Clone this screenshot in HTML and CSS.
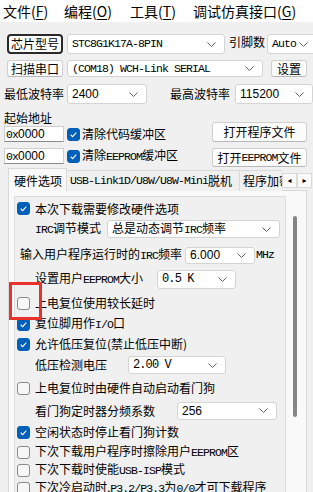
FILE: index.html
```html
<!DOCTYPE html>
<html lang="zh">
<head>
<meta charset="utf-8">
<link rel="stylesheet" href="styles.css">
</head>
<body>
<div class="menubar">
  <span>文件(<u>F</u>)</span>
  <span>编程(<u>O</u>)</span>
  <span>工具(<u>T</u>)</span>
  <span>调试仿真接口(<u>G</u>)</span>
</div>

<div class="top">
  <div class="row row1">
    <div class="btn focus w56">芯片型号</div>
    <div class="sel w158 ml4"><span class="m">STC8G1K17A-8PIN</span><svg class="chev" viewBox="0 0 9 5"><polyline points="0.5,0.5 4.5,4.5 8.5,0.5"/></svg></div>
    <span class="lbl ml4">引脚数</span>
    <div class="sel w50 ml2"><span class="m">Auto</span><svg class="chev" viewBox="0 0 9 5"><polyline points="0.5,0.5 4.5,4.5 8.5,0.5"/></svg></div>
  </div>
  <div class="row row2">
    <div class="btn w56">扫描串口</div>
    <div class="sel w196 ml4"><span class="m">(COM18) WCH-Link SERIAL</span><svg class="chev" viewBox="0 0 9 5"><polyline points="0.5,0.5 4.5,4.5 8.5,0.5"/></svg></div>
    <div class="btn w36 ml8">设置</div>
  </div>
  <div class="row row3">
    <span class="lbl w63">最低波特率</span>
    <div class="sel w80"><span class="s">2400</span><svg class="chev" viewBox="0 0 9 5"><polyline points="0.5,0.5 4.5,4.5 8.5,0.5"/></svg></div>
    <span class="lbl ml23">最高波特率</span>
    <div class="sel w78 ml5"><span class="s">115200</span><svg class="chev" viewBox="0 0 9 5"><polyline points="0.5,0.5 4.5,4.5 8.5,0.5"/></svg></div>
  </div>
  <div class="addr">
    <div class="addr-left">
      <div class="lbl h16">起始地址</div>
      <div class="row h16">
        <div class="inp"><span class="m">0x</span>0000</div>
        <span class="cb on ml3"><svg viewBox="0 0 13 13"><path d="M3.2 6.8 L5.5 9 L9.8 4.3"/></svg></span>
        <span class="lbl ml2">清除代码缓冲区</span>
      </div>
      <div class="row h16 mt6">
        <div class="inp"><span class="m">0x</span>0000</div>
        <span class="cb on ml3"><svg viewBox="0 0 13 13"><path d="M3.2 6.8 L5.5 9 L9.8 4.3"/></svg></span>
        <span class="lbl ml2">清除<span class="m">EEPROM</span>缓冲区</span>
      </div>
    </div>
    <div class="addr-right">
      <div class="btn wide h20">打开程序文件</div>
      <div class="btn wide h19 mt6">打开<span class="m">EEPROM</span>文件</div>
    </div>
  </div>
</div>

<div class="tabbar">
  <div class="tabs">
    <div class="tab active">硬件选项</div>
    <div class="tab"><span class="m">USB-Link1D/U8W/U8W-Mini</span>脱机</div>
    <div class="tab">程序加密后传输</div>
  </div>
  <div class="spin"><span class="arr">&#9666;</span></div>
  <div class="spin"><span class="arr">&#9656;</span></div>
</div>

<div class="panel">
  <div class="group">
    <div class="prow h19 ind0">
      <span class="cb on"><svg viewBox="0 0 13 13"><path d="M3.2 6.8 L5.5 9 L9.8 4.3"/></svg></span>
      <span class="lbl ml5">本次下载需要修改硬件选项</span>
    </div>
    <div class="prow h22 ind18">
      <span class="lbl"><span class="m">IRC</span>调节模式</span>
      <div class="sel psel w173 h18 ml6"><span>总是动态调节<span class="m">IRC</span>频率</span><svg class="chev" viewBox="0 0 9 5"><polyline points="0.5,0.5 4.5,4.5 8.5,0.5"/></svg></div>
    </div>
    <div class="prow h22 mt4 ind3">
      <span class="lbl">输入用户程序运行时的<span class="m">IRC</span>频率</span>
      <div class="sel psel w70 h17 ml3"><span class="s">6.000</span><svg class="chev" viewBox="0 0 9 5"><polyline points="0.5,0.5 4.5,4.5 8.5,0.5"/></svg></div>
      <span class="m ml1">MHz</span>
    </div>
    <div class="prow h26 ind18">
      <span class="lbl">设置用户<span class="m">EEPROM</span>大小</span>
      <div class="sel psel w79 h19 ml14"><span class="m">0.5 K</span><svg class="chev" viewBox="0 0 9 5"><polyline points="0.5,0.5 4.5,4.5 8.5,0.5"/></svg></div>
    </div>
    <div class="prow h22 ind0">
      <span class="cb"></span>
      <span class="lbl ml5">上电复位使用较长延时</span>
    </div>
    <div class="prow h20 ind0">
      <span class="cb on"><svg viewBox="0 0 13 13"><path d="M3.2 6.8 L5.5 9 L9.8 4.3"/></svg></span>
      <span class="lbl ml5">复位脚用作<span class="m">I/O</span>口</span>
    </div>
    <div class="prow h20 ind0">
      <span class="cb on"><svg viewBox="0 0 13 13"><path d="M3.2 6.8 L5.5 9 L9.8 4.3"/></svg></span>
      <span class="lbl ml5">允许低压复位(禁止低压中断)</span>
    </div>
    <div class="prow h22 ind18">
      <span class="lbl">低压检测电压</span>
      <div class="sel psel w98 h18 ml21"><span class="m">2.00 V</span><svg class="chev" viewBox="0 0 9 5"><polyline points="0.5,0.5 4.5,4.5 8.5,0.5"/></svg></div>
    </div>
    <div class="prow h24 ind0">
      <span class="cb"></span>
      <span class="lbl ml5">上电复位时由硬件自动启动看门狗</span>
    </div>
    <div class="prow h21 ind18">
      <span class="lbl">看门狗定时器分频系数</span>
      <div class="sel psel w100 h18 ml22"><span class="s">256</span><svg class="chev" viewBox="0 0 9 5"><polyline points="0.5,0.5 4.5,4.5 8.5,0.5"/></svg></div>
    </div>
    <div class="prow h22 ind0">
      <span class="cb on"><svg viewBox="0 0 13 13"><path d="M3.2 6.8 L5.5 9 L9.8 4.3"/></svg></span>
      <span class="lbl ml5">空闲状态时停止看门狗计数</span>
    </div>
    <div class="prow h18 ind0">
      <span class="cb"></span>
      <span class="lbl ml5">下次下载用户程序时擦除用户<span class="m">EEPROM</span>区</span>
    </div>
    <div class="prow h18 ind0">
      <span class="cb"></span>
      <span class="lbl ml5">下次下载时使能<span class="m">USB-ISP</span>模式</span>
    </div>
    <div class="prow h18 ind0">
      <span class="cb"></span>
      <span class="lbl ml5">下次冷启动时,<span class="m">P3.2/P3.3</span>为<span class="m">0/0</span>才可下载程序</span>
    </div>
  </div>
  <div class="vscroll"><div class="thumb"></div></div>
</div>

<div class="mark"></div>
</body>
</html>
```

FILE: styles.css
```css
* { box-sizing: border-box; }

body {
  margin: 0;
  width: 313px;
  height: 492px;
  overflow: hidden;
  position: relative;
  background: #f0f0f0;
  color: #000;
  font-family: "Noto Sans CJK SC", "Microsoft YaHei", sans-serif;
  font-size: 12px;
  line-height: 16px;
}

.m {
  font-family: "Liberation Mono", "Noto Sans CJK SC", monospace;
  font-size: 11.5px;
  letter-spacing: -0.9px;
}
.s {
  font-family: "Liberation Sans", "DejaVu Sans", sans-serif;
  font-size: 12px;
}

/* menu */
.menubar {
  height: 22px;
  background: #fff;
  display: grid;
  grid-template-columns: 61px 66px 63px auto;
  align-items: center;
  padding-left: 3px;
  font-size: 14px;
  line-height: 18px;
  white-space: nowrap;
}
.menubar u { text-decoration: underline; text-underline-offset: 2px; }

/* top area */
.top { padding-left: 7px; }
.row { display: flex; align-items: center; white-space: nowrap; }
.row1 { margin-top: 12px; height: 20px; }
.row1 > * { height: 20px; }
.row2 { margin-top: 6px; height: 17px; }
.row2 > * { height: 17px; }
.row3 { margin-top: 7px; height: 20px; margin-left: -3px; }
.row3 > .sel { height: 20px; }

.lbl { white-space: nowrap; }
.h16 { height: 16px; }
.h17 { height: 17px; }
.h18 { height: 18px; }
.h19 { height: 19px; }
.h20 { height: 20px; }
.h21 { height: 21px; }
.h22 { height: 22px; }
.h24 { height: 24px; }
.h26 { height: 26px; }
.mt4 { margin-top: 4px; }
.mt6 { margin-top: 6px; }
.ml1 { margin-left: 1px; }
.ml2 { margin-left: 2px; }
.ml3 { margin-left: 3px; }
.ml4 { margin-left: 4px; }
.ml5 { margin-left: 5px; }
.ml6 { margin-left: 6px; }
.ml8 { margin-left: 8px; }
.ml14 { margin-left: 14px; }
.ml21 { margin-left: 21px; }
.ml22 { margin-left: 22px; }
.ml23 { margin-left: 23px; }
.w36 { width: 36px; }
.w50 { width: 50px; }
.w56 { width: 56px; }
.w63 { width: 63px; }
.w70 { width: 70px; }
.w78 { width: 78px; }
.w79 { width: 79px; }
.w80 { width: 80px; }
.w98 { width: 98px; }
.w100 { width: 100px; }
.w158 { width: 158px; }
.w173 { width: 173px; }
.w196 { width: 196px; }

.btn {
  display: flex;
  align-items: center;
  justify-content: center;
  background: #fdfdfd;
  border: 1px solid #d0d0d0;
  border-bottom-color: #b8b8b8;
  border-radius: 3px;
  white-space: nowrap;
  flex: none;
}
.btn.focus {
  border: 2px solid #2a2a2a;
  box-shadow: inset 0 0 0 1px #fff;
  border-radius: 4px;
}
.btn.wide { width: 95px; }

.sel {
  display: flex;
  align-items: center;
  justify-content: space-between;
  background: #fff;
  border: 1px solid #d4d4d4;
  border-radius: 3px;
  padding: 0 8px 0 4px;
  white-space: nowrap;
  overflow: hidden;
  flex: none;
}
.chev {
  width: 9px;
  height: 5px;
  flex: none;
  fill: none;
  stroke: #606060;
  stroke-width: 1;
}

.addr { display: flex; margin-left: -3px; }
.addr-left { width: 205px; margin-top: 6px; }
.addr-right { margin-top: 18px; margin-left: 3px; }

.inp {
  width: 60px;
  height: 16px;
  background: #fff;
  border: 1px solid #cfcfcf;
  border-bottom-color: #8a8a8a;
  font-family: "Liberation Sans", sans-serif;
  font-size: 12px;
  line-height: 14px;
  padding-left: 1px;
  flex: none;
}

.cb {
  width: 13px;
  height: 13px;
  border-radius: 3px;
  border: 1px solid #8a8a8a;
  background: #f7f7f7;
  flex: none;
  display: flex;
}
.cb.on {
  background: #005fb8;
  border-color: #005fb8;
}
.cb svg { width: 11px; height: 11px; }
.cb path { fill: none; stroke: #fff; stroke-width: 1.3; }

/* tabs */
.tabbar {
  display: flex;
  align-items: flex-end;
  height: 24px;
  padding-left: 8px;
  position: relative;
  z-index: 1;
}
.tabs {
  display: flex;
  align-items: flex-end;
  width: 274px;
  overflow: hidden;
  height: 24px;
}
.tab {
  height: 21px;
  border: 1px solid #d9d9d9;
  border-bottom: none;
  padding: 0 7px 0 3px;
  display: flex;
  align-items: center;
  white-space: nowrap;
  background: #f0f0f0;
  margin-left: -1px;
  flex: none;
  font-size: 12px;
}
.tab.active {
  height: 24px;
  margin-left: 0;
  padding: 0 4px 0 5px;
  background: #f9f9f9;
  margin-bottom: -1px;
  position: relative;
}
.spin {
  width: 15px;
  height: 15px;
  align-self: center;
  margin-top: 3px;
  background: #fbfbfb;
  border: 1px solid #dadada;
  display: flex;
  align-items: center;
  justify-content: center;
  font-size: 8px;
  line-height: 8px;
  font-family: "DejaVu Sans", sans-serif;
  flex: none;
}
.arr { display: block; }

/* panel */
.panel {
  margin-left: 8px;
  margin-top: -1px;
  width: 299px;
  height: 310px;
  border: 1px solid #d9d9d9;
  background: #f9f9f9;
  padding: 5px 0 0 5px;
  display: flex;
}
.group {
  width: 272px;
  height: 310px;
  border: 1px solid #dcdcdc;
  background: #f0f0f0;
  padding-top: 2px;
  overflow: hidden;
}
.prow {
  display: flex;
  align-items: center;
  white-space: nowrap;
}
.ind0 { padding-left: 2px; }
.ind3 { padding-left: 5px; }
.ind18 { padding-left: 20px; }
.psel > span { font-size: 12px; }

.vscroll {
  width: 20px;
  display: flex;
  justify-content: flex-start;
  padding-top: 20px;
  padding-left: 7px;
}
.thumb {
  width: 4px;
  height: 201px;
  background: #858585;
  border-radius: 2px;
}

/* annotation overlay */
.mark {
  position: absolute;
  left: 9px;
  top: 282px;
  width: 33px;
  height: 38px;
  border: 3px solid #e8322b;
}
```
